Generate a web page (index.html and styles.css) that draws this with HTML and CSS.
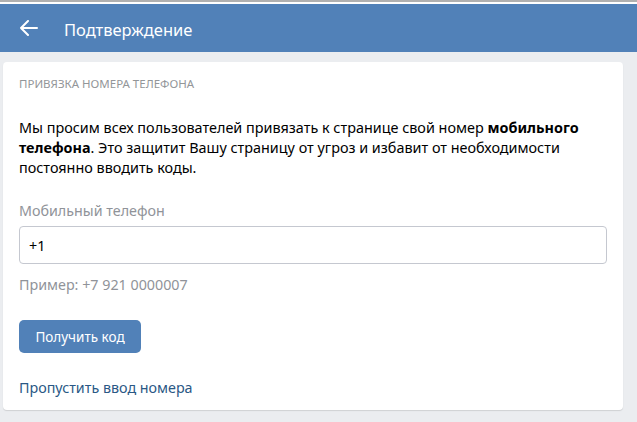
FILE: index.html
```html
<!DOCTYPE html>
<html lang="ru">
<head>
<meta charset="utf-8">
<link rel="stylesheet" href="styles.css">
</head>
<body>
<div class="topline"></div>
<header class="bar">
  <span class="back">
    <svg width="18" height="16" viewBox="0 0 18 16"><path d="M8 1 L1 8 L8 15 M1 8 H17" fill="none" stroke="#fff" stroke-width="2" stroke-linecap="round" stroke-linejoin="round"/></svg>
  </span>
  <span class="title">Подтверждение</span>
</header>
<main class="page">
  <section class="card">
    <div class="cap">Привязка номера телефона</div>
    <p class="text">Мы просим всех пользователей привязать к странице свой номер <b>мобильного телефона</b>. Это защитит Вашу страницу от угроз и избавит от необходимости постоянно вводить коды.</p>
    <div class="label">Мобильный телефон</div>
    <div class="input">+1</div>
    <div class="hint">Пример: +7 921 0000007</div>
    <div class="btnrow"><span class="btn">Получить код</span></div>
    <a class="link">Пропустить ввод номера</a>
  </section>
</main>
</body>
</html>
```
FILE: styles.css
```css
html, body {
  margin: 0;
  padding: 0;
  background: #ebedf0;
  font-family: "Noto Sans", "Open Sans", sans-serif;
  width: 637px;
  height: 422px;
  overflow: hidden;
}
.topline {
  height: 4px;
  background: #fff;
  border-top: 2px solid #b0b0b0;
  box-sizing: border-box;
  margin-top: 0;
}
.bar {
  height: 48px;
  background: #5181b8;
  display: flex;
  align-items: center;
  color: #fff;
}
.back {
  width: 18px;
  height: 16px;
  margin-left: 20px;
  display: flex;
}
.title {
  margin-left: 26px;
  font-size: 16.5px;
  color: #fff;
  margin-top: 2px;
}
.page {
  padding: 10px 14px 0 3px;
}
.card {
  background: #fff;
  border-radius: 4px;
  box-shadow: 0 1px 1px rgba(0,0,0,0.12);
  padding: 14px 16px 12px 16px;
  height: 348px;
  box-sizing: border-box;
}
.cap {
  text-transform: uppercase;
  font-size: 11.5px;
  color: #939699;
  line-height: 16px;
}
.text {
  margin: 26px 0 0;
  font-size: 14.4px;
  line-height: 20px;
  color: #000;
}
.text b { font-weight: 700; }
.label {
  margin-top: 23px;
  font-size: 14.3px;
  color: #909399;
  line-height: 20px;
}
.input {
  margin-top: 5px;
  height: 38px;
  border: 1px solid #c5c8d0;
  border-radius: 4px;
  box-sizing: border-box;
  padding: 0 9px;
  display: flex;
  align-items: center;
  font-size: 14.3px;
  color: #000;
  width: 588px;
}
.hint {
  margin-top: 11px;
  font-size: 14.3px;
  color: #909399;
  line-height: 20px;
}
.btnrow {
  margin-top: 25px;
  display: flex;
}
.btn {
  background: #5181b8;
  color: #fff;
  border-radius: 5px;
  height: 33px;
  width: 122px;
  display: flex;
  align-items: center;
  justify-content: center;
  font-size: 13.5px;
}
.link {
  display: block;
  margin-top: 25px;
  color: #2a5885;
  font-size: 14.3px;
  line-height: 20px;
}
```
